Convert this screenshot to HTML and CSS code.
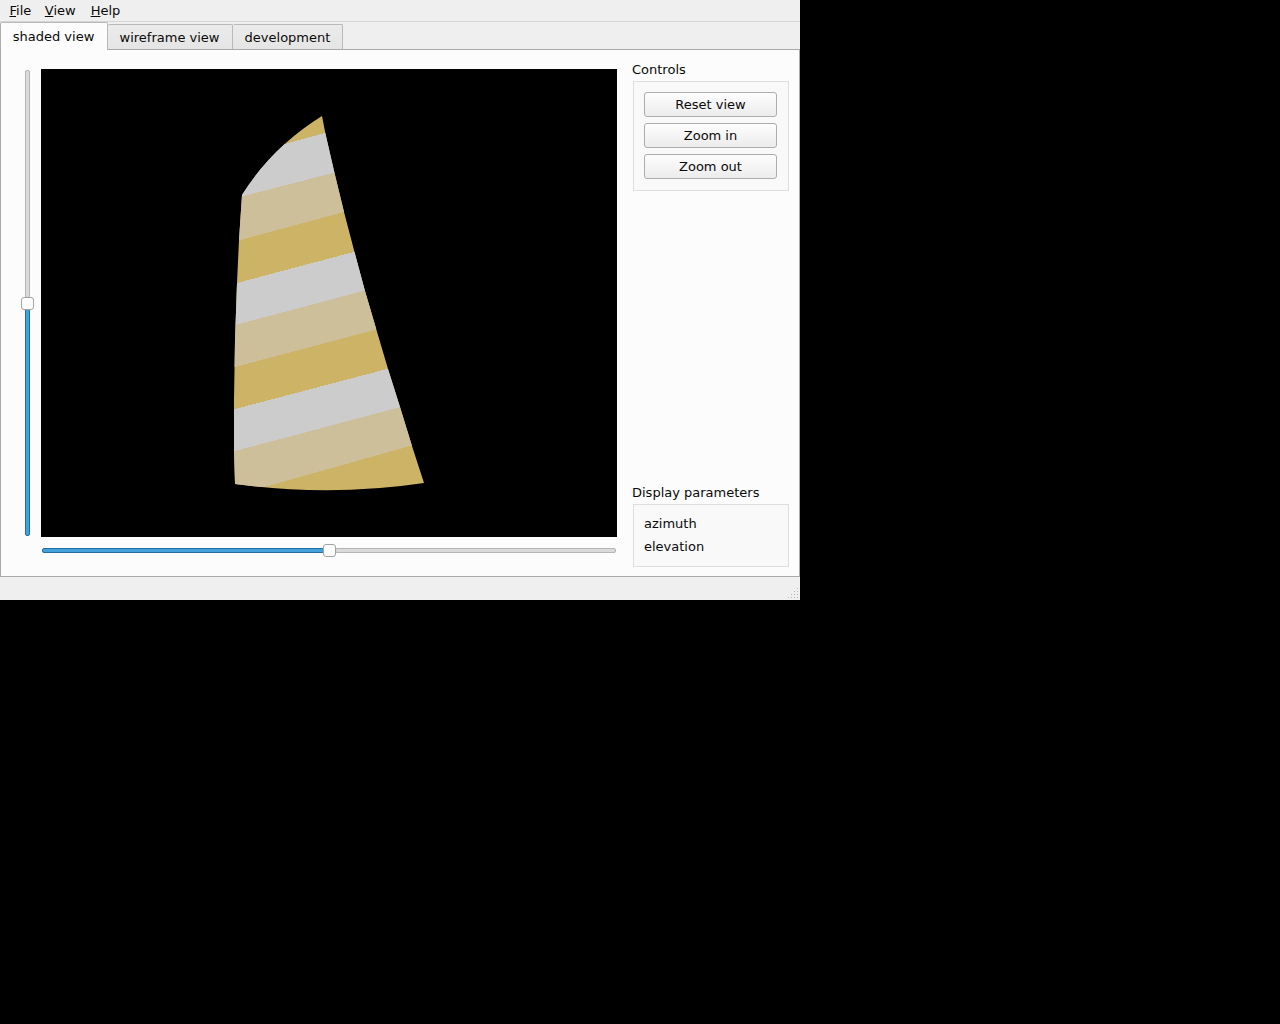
FILE: index.html
```html
<!DOCTYPE html>
<html lang="en">
<head>
<meta charset="utf-8">
<title>Sail viewer</title>
<link rel="stylesheet" href="styles.css">
</head>
<body>
<div class="window">
  <nav class="menubar"><span><u>F</u>ile</span><span><u>V</u>iew</span><span class="help"><u>H</u>elp</span></nav>
  <div class="tabs">
    <div class="tab active">shaded view</div>
    <div class="tab wire">wireframe view</div>
    <div class="tab dev">development</div>
  </div>
  <main class="pane">
    <div class="viewer">
      <div class="slider vertical"><div class="rest"></div><div class="handle"></div><div class="fill"></div></div>
      <svg class="canvas" width="576" height="468" viewBox="41 69 576 468" shape-rendering="crispEdges">
        <defs>
          <clipPath id="sail"><path d="M322 116 L325.5 134 L334.5 173 L344 212 L354.5 252 L365 291 L376.5 330 L388 369 L400 407 L412 446 L424 483 Q330 497 235 484 L234 450 L234 400 L235 340 L237 283 L239 240 L242 195 Q272 147 322 116Z"/></clipPath>
        </defs>
        <rect x="41" y="69" width="576" height="468" fill="#000"/>
        <g clip-path="url(#sail)">
          <rect x="220" y="100" width="220" height="400" fill="#ccb366"/>
          <path fill="#cccccc" d="M220 162 L440 101 V145.500 L220 202Z"/>
          <path fill="#ccbf99" d="M220 202 L440 145.500 V186 L220 245.500Z"/>
          <path fill="#cccccc" d="M220 287.500 L440 229 V270.500 L220 329Z"/>
          <path fill="#ccbf99" d="M220 329 L440 270.500 V312.500 L220 371Z"/>
          <path fill="#cccccc" d="M220 413 L440 355 V396.500 L220 455Z"/>
          <path fill="#ccbf99" d="M220 455 L440 396.500 V437.500 L220 499.500Z"/>
        </g>
      </svg>
      <div class="slider horizontal"><div class="fill"></div><div class="handle"></div><div class="rest"></div></div>
    </div>
    <aside class="side">
      <section>
        <h2>Controls</h2>
        <div class="group buttons"><button>Reset view</button><button>Zoom in</button><button>Zoom out</button></div>
      </section>
      <section>
        <h2>Display parameters</h2>
        <div class="group params"><div>azimuth</div><div>elevation</div></div>
      </section>
    </aside>
  </main>
  <footer class="statusbar">
    <svg width="13" height="13" fill="#b8b8b8" shape-rendering="crispEdges"><path d="M10 1h1v1h-1zM7 4h1v1h-1zM10 4h1v1h-1zM4 7h1v1h-1zM7 7h1v1h-1zM10 7h1v1h-1zM1 10h1v1h-1zM4 10h1v1h-1zM7 10h1v1h-1zM10 10h1v1h-1z"/></svg>
  </footer>
</div>
</body>
</html>
```
FILE: styles.css
```css
* { box-sizing: border-box; }
body { margin: 0; background: #000; color: #0a0a0a; font: 13px/16px "DejaVu Sans", sans-serif; }
.window { width: 800px; height: 600px; background: #efefef; display: flex; flex-direction: column; }
.menubar { height: 22px; padding: 3px 0 0 9.500px; display: flex; gap: 13.500px; border-bottom: 1px solid #d5d5d5; }
.menubar .help { margin-left: 1.500px; }
.menubar u { text-underline-offset: 1px; text-decoration-thickness: 1px; text-decoration-skip-ink: none; }
.tabs { height: 27px; display: flex; align-items: flex-end; }
.tab { height: 25px; padding-top: 5px; text-align: center; border: 1px solid #b9b9b9; border-left: 0; border-bottom: 0; border-radius: 2px 2px 0 0; background: linear-gradient(#ebebeb, #e5e5e5); white-space: nowrap; }
.tab.active { width: 108px; height: 28px; padding-top: 6px; padding-right: 1px; margin-bottom: -1px; border-left: 1px solid #adadad; background: #fcfcfc; position: relative; }
.tab.wire { width: 125px; padding-right: 1px; }
.dev { width: 110px; }
.pane { height: 528px; display: flex; justify-content: space-between; padding: 19px 10px 9px 18px; background: #fcfcfc; border: 1px solid #a9a9a9; }
.viewer { display: grid; grid-template: 468px 27px / 16px 576px; column-gap: 6px; width: 598px; height: 495px; }
.canvas { display: block; }
.slider { display: flex; align-items: center; }
.vertical { flex-direction: column; padding: 1px 0; }
.horizontal { grid-column: 2; padding: 0 1px; }
.rest { background: #dadada; border: 1px solid #b5b5b5; border-radius: 2px; }
.fill { background: #43a2dc; border: 1px solid #246d9f; border-radius: 2px; }
.vertical .rest { width: 5px; height: 228px; }
.vertical .fill { width: 5px; flex: 1; }
.horizontal .fill { width: 282px; height: 5px; }
.horizontal .rest { height: 5px; flex: 1; }
.handle { flex: none; width: 13px; height: 13px; margin: -1px; border: 1px solid #a3a3a3; border-radius: 3px; background: #fdfdfd; position: relative; }
.side { width: 157px; margin-top: -8px; display: flex; flex-direction: column; justify-content: space-between; }
h2 { margin: 0; height: 20px; padding-top: 1px; font: inherit; }
.group { margin-left: 1px; border: 1px solid #dedede; background: #f9f9f9; }
.buttons { height: 110px; padding: 10px 11px 10px 10px; display: flex; flex-direction: column; gap: 6px; }
button { height: 25px; padding: 0; font: inherit; color: inherit; border: 1px solid #acacac; border-radius: 3px; background: linear-gradient(#fdfdfd, #ececec); }
.params { height: 63px; padding: 11px 10px; display: flex; flex-direction: column; gap: 7px; }
.statusbar { flex: 1; display: flex; justify-content: flex-end; align-items: flex-end; }
```
